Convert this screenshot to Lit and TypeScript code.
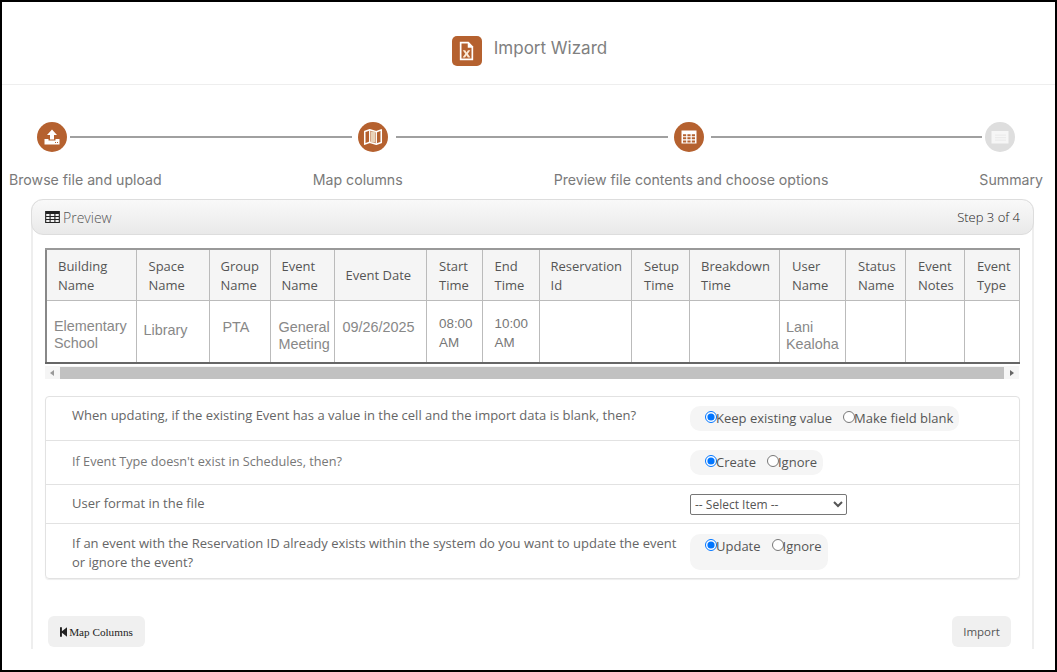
import { LitElement, html, css, svg } from "lit";
import { customElement } from "lit/decorators.js";

const COLS = [90, 73, 61, 64, 92.5, 55.5, 57, 92.5, 58, 90, 66, 60, 59, 55];
const HEAD: [string, string?][] = [
  ["Building", "Name"], ["Space", "Name"], ["Group", "Name"], ["Event", "Name"], ["Event Date"],
  ["Start", "Time"], ["End", "Time"], ["Reservation", "Id"], ["Setup", "Time"], ["Breakdown", "Time"],
  ["User", "Name"], ["Status", "Name"], ["Event", "Notes"], ["Event", "Type"],
];

const uploadIcon = svg`<svg viewBox="0 0 20 20" width="20" height="20"><path fill="#fff" d="M10 2.5 15 8h-3v4.5H8V8H5z"/><path fill="#fff" d="M2.5 12h4v1.6h7V12h4v5.5h-15z"/><path fill="#b5612f" d="M13 15h1v1h-1zM15 15h1v1h-1z"/></svg>`;
const mapIcon = svg`<svg viewBox="0 0 20 20" width="22" height="22"><path fill="none" stroke="#fff" stroke-width="1.4" stroke-linejoin="round" d="M2.5 5 7 3.5l6 1.8 4.5-1.8v11.5L13 16.5 7 14.7 2.5 16.5z"/><path fill="#fff" d="M6.4 3.8h1.2v11H6.4zM12.4 5.2h1.2v11h-1.2z"/><path fill="#e9d2b8" d="M8 5h4v10H8z"/></svg>`;
const tableIcon = svg`<svg viewBox="0 0 20 20" width="20" height="20"><path fill="#fff" d="M2.5 3.5h15v13h-15z"/><path fill="#b5612f" d="M4 7.2h3.2v2H4zM8.4 7.2h3.2v2H8.4zM12.8 7.2H16v2h-3.2zM4 10.3h3.2v2H4zM8.4 10.3h3.2v2H8.4zM12.8 10.3H16v2h-3.2zM4 13.4h3.2v2H4zM8.4 13.4h3.2v2H8.4zM12.8 13.4H16v2h-3.2z"/></svg>`;
const summaryIcon = svg`<svg viewBox="0 0 20 20" width="20" height="20"><path fill="#f6f6f6" d="M1.5 4h17v12.5h-17z"/><path fill="#ebebeb" d="M5 7.5h11v1.2H5zM5 10h11v1.2H5zM5 12.5h11v1.2H5z"/></svg>`;
const fileIcon = svg`<svg viewBox="0 0 20 24" width="17" height="20"><path fill="#fff" d="M2 1h10.5L18 6.5V23H2z"/><path fill="#b5612f" d="M4 3h7.5v5H16v13H4z"/><path fill="#fff" d="M12.6 2.8 15.8 6h-3.2z"/><path fill="#fbe9d6" d="M5.5 11h3l1.6 2.7L11.7 11h2.9l-3 4.4 3.1 4.4h-3l-1.7-2.8-1.7 2.8h-3l3.2-4.4z"/></svg>`;
const smallTable = svg`<svg viewBox="0 0 16 13" width="15" height="12"><path fill="#222" fill-rule="evenodd" d="M0 0h16v13H0zM1.2 3.2v2.2h3.6V3.2zm4.8 0v2.2h4V3.2zm5.2 0v2.2h3.6V3.2zM1.2 6.5v2.2h3.6V6.5zm4.8 0v2.2h4V6.5zm5.2 0v2.2h3.6V6.5zM1.2 9.8V12h3.6V9.8zm4.8 0V12h4V9.8zm5.2 0V12h3.6V9.8z"/></svg>`;
const stepBack = svg`<svg viewBox="0 0 8 11" width="7" height="10"><path fill="#222" d="M0 0h2.2v4.6L8 0v11L2.2 6.4V11H0z"/></svg>`;

@customElement("app-root")
export class AppRoot extends LitElement {
  static styles = css`
    :host { display: block; width: 1057px; height: 672px; box-sizing: border-box; border: 2px solid #000; background: #fff; overflow: hidden; font-family: "Open Sans", sans-serif; color: #666; }
    * { box-sizing: border-box; }
    .top { height: 83px; border-bottom: 1px solid #eee; display: flex; align-items: center; justify-content: center; gap: 12px; padding-left: 2px; padding-top: 15px; }
    .logo { width: 30px; height: 30px; border-radius: 5px; background: #b5612f; display: flex; align-items: center; justify-content: center; }
    .title { font: 400 17px/20px Inter, sans-serif; color: #808080; margin-top: -5px; }
    .steps { display: flex; align-items: center; padding-left: 35px; margin-top: 37px; height: 30px; }
    .dot { flex: none; width: 30px; height: 30px; border-radius: 50%; background: #b5612f; display: flex; align-items: center; justify-content: center; }
    .dot svg { display: block; }
    .dot.off { background: #dedede; }
    .ln { flex: none; height: 2px; background: #a0a0a0; }
    .labels { display: flex; justify-content: space-between; padding: 0 12px 0 7px; margin-top: 19px; font: 400 14.15px/18px Inter, sans-serif; color: #7a7a7a; }
    .panel { margin: 10px 21px 0 29px; height: 450px; border-left: 2px solid #eee; border-right: 2px solid #eee; border-radius: 12px 12px 0 0; }
    .phead { height: 36px; margin: 0 -2px; border: 1px solid #ddd; border-radius: 12px; background: linear-gradient(#f9f9f9, #e9e9e9); display: flex; align-items: center; justify-content: space-between; padding: 0 13px 0 13px; font-size: 13px; }
    .ptitle { display: flex; align-items: center; gap: 3px; font-weight: 300; font-size: 14px; color: #555; }
    .ptitle svg { display: block; }
    .pstep { font-weight: 300; color: #222; font-size: 13px; }
    .wrap { margin: 13px 0 0 12px; width: 974px; }
    table { border-collapse: collapse; table-layout: fixed; width: 974px; border-top: 2px solid #999; border-left: 2px solid #888; border-right: 1px solid #bbb; border-bottom: 2px solid #666; }
    th { height: 51px; background: #f5f5f5; border: 1px solid #bbb; border-top: 0; font-weight: 400; font-size: 13px; line-height: 18.7px; color: #555; text-align: left; padding: 2px 0 0 12px; white-space: nowrap; overflow: hidden; }
    th:nth-child(1), th:nth-child(3), th:nth-child(4), th:nth-child(5), th:nth-child(8), th:nth-child(10) { padding-left: 11px; }
    td { height: 63px; border: 1px solid #bbb; border-bottom: 0; padding: 0; vertical-align: top; font: 14.4px/17.5px "Liberation Sans", sans-serif; color: #888; overflow: hidden; }
    .c1 { padding: 17px 0 0 7px; }
    .c2 { padding: 21px 0 0 7px; }
    .c3 { padding: 18px 0 0 13px; }
    .c4 { padding: 18px 0 0 8px; }
    .c5 { padding: 18px 0 0 8px; }
    .c6 { padding: 13px 0 0 12px; font-size: 13.4px; line-height: 19px; color: #777; }
    .c7 { padding: 18px 0 0 6px; }
    .sb { height: 13px; margin-top: 2px; background: #f5f5f5; display: flex; align-items: center; justify-content: space-between; }
    .thumb { width: 944px; height: 12px; background: #c1c1c1; }
    .ar { width: 14px; display: flex; justify-content: center; }
    .al { border: 3px solid transparent; border-right: 4px solid #999; border-left: 0; }
    .arr { border: 3px solid transparent; border-left: 4px solid #666; border-right: 0; }
    .card { margin: 17px 0 0 12px; width: 975px; border: 1px solid #e2e2e2; border-radius: 4px; box-shadow: 0 1px 1px #eee; }
    .row { display: grid; grid-template-columns: 644px 1fr; border-top: 1px solid #e2e2e2; }
    .row:first-child { border-top: 0; }
    .q { padding: 9px 12px 0 26px; font-size: 13px; line-height: 19px; color: #666; }
    .q.small { padding-top: 11px; font-size: 12.7px; color: #777; }
    .r4 .q { padding-top: 10px; }
    .r1 { height: 43px; }
    .r2 { height: 44px; }
    .r3 { height: 39px; }
    .r4 { height: 55px; }
    .cell { padding-top: 9px; display: flex; align-items: flex-start; }
    .r4 .cell { padding-top: 10px; }
    .pill { display: flex; align-items: flex-start; height: 25px; padding: 0 6px 0 15px; background: #f5f5f5; border-radius: 10px; font-size: 13px; line-height: 24px; color: #555; }
    .r4 .pill { height: 36px; }
    .pill label { display: flex; align-items: flex-start; margin-right: 11px; }
    .pill label:last-child { margin-right: 0; }
    input { width: 12px; height: 12px; margin: 5px -1px 0 0; }
    select { display: block; width: 157px; height: 21px; font: 12px "Open Sans", sans-serif; color: #555; background: #fff; border: 1px solid #767676; border-radius: 2px; padding: 0; }
    .btns { display: flex; justify-content: space-between; margin-top: 37px; padding: 0 21px 0 15px; }
    .btn { height: 31px; border: 0; border-radius: 6px; background: #f0f0f0; display: flex; align-items: center; justify-content: center; }
    .b1 { width: 97px; gap: 2px; font: 11.2px "Liberation Serif", serif; color: #222; padding: 0; }
    .b2 { width: 59px; font: 11.5px "Open Sans", sans-serif; color: #555; padding: 0; }
  `;

  render() {
    return html`
      <div class="top"><span class="logo">${fileIcon}</span><span class="title">Import Wizard</span></div>
      <div class="steps">
        <span class="dot">${uploadIcon}</span>
        <span class="ln" style="width:282px;margin:0 6px 0 3px"></span>
        <span class="dot">${mapIcon}</span>
        <span class="ln" style="width:272px;margin:0 6px 0 8px"></span>
        <span class="dot">${tableIcon}</span>
        <span class="ln" style="width:271px;margin:0 3px 0 7px"></span>
        <span class="dot off">${summaryIcon}</span>
      </div>
      <div class="labels"><span>Browse file and upload</span><span>Map columns</span><span>Preview file contents and choose options</span><span>Summary</span></div>
      <div class="panel">
        <div class="phead"><span class="ptitle">${smallTable}Preview</span><span class="pstep">Step 3 of 4</span></div>
        <div class="wrap">
          <table>
            <colgroup>${COLS.map((w) => html`<col style="width:${w}px" />`)}</colgroup>
            <thead><tr>${HEAD.map(([a, b]) => html`<th>${a}${b ? html`<br />${b}` : ""}</th>`)}</tr></thead>
            <tbody><tr>
              <td class="c1">Elementary<br />School</td>
              <td class="c2">Library</td>
              <td class="c3">PTA</td>
              <td class="c4">General<br />Meeting</td>
              <td class="c5">09/26/2025</td>
              <td class="c6">08:00<br />AM</td>
              <td class="c6">10:00<br />AM</td>
              <td></td><td></td><td></td>
              <td class="c7">Lani<br />Kealoha</td>
              <td></td><td></td><td></td>
            </tr></tbody>
          </table>
          <div class="sb"><span class="ar"><i class="al"></i></span><span class="thumb"></span><span class="ar"><i class="arr"></i></span></div>
        </div>
        <div class="card">
          <div class="row r1">
            <div class="q">When updating, if the existing Event has a value in the cell and the import data is blank, then?</div>
            <div class="cell"><span class="pill"><label><input type="radio" name="a" checked />Keep existing value</label><label><input type="radio" name="a" />Make field blank</label></span></div>
          </div>
          <div class="row r2">
            <div class="q small">If Event Type doesn't exist in Schedules, then?</div>
            <div class="cell"><span class="pill"><label><input type="radio" name="b" checked />Create</label><label><input type="radio" name="b" />Ignore</label></span></div>
          </div>
          <div class="row r3">
            <div class="q">User format in the file</div>
            <div class="cell"><select><option>-- Select Item --</option></select></div>
          </div>
          <div class="row r4">
            <div class="q">If an event with the Reservation ID already exists within the system do you want to update the event or ignore the event?</div>
            <div class="cell"><span class="pill"><label><input type="radio" name="c" checked />Update</label><label><input type="radio" name="c" />Ignore</label></span></div>
          </div>
        </div>
        <div class="btns">
          <button class="btn b1">${stepBack}Map Columns</button>
          <button class="btn b2">Import</button>
        </div>
      </div>
    `;
  }
}
